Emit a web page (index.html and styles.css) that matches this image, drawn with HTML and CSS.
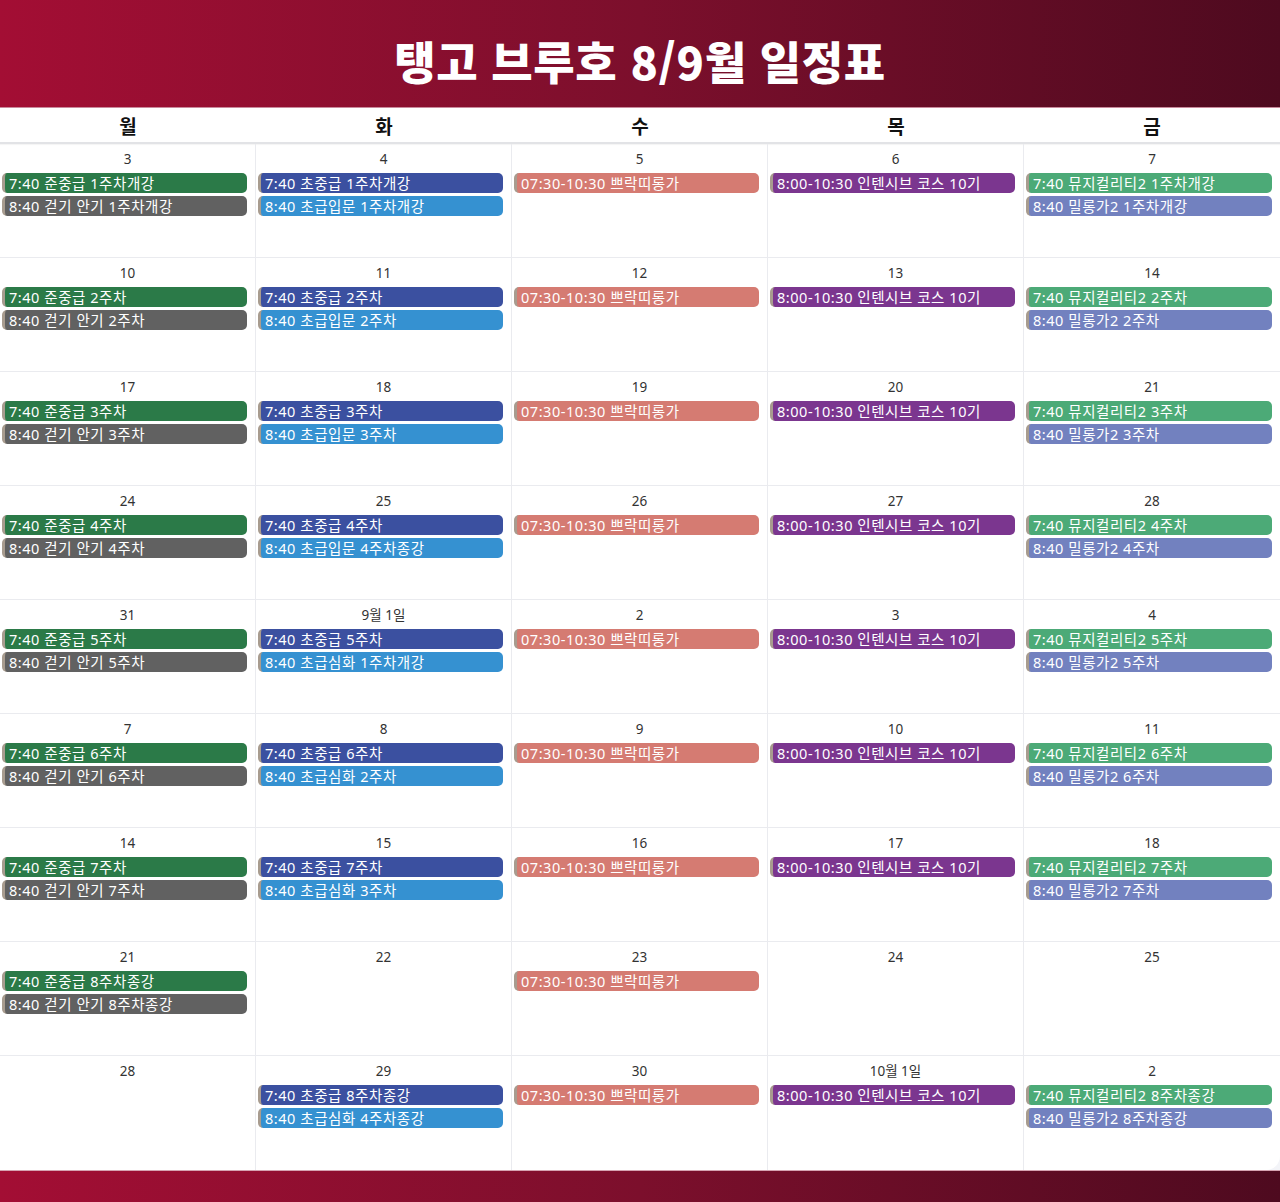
FILE: index.html
```html
<!DOCTYPE html>
<html lang="ko">
<head>
<meta charset="utf-8">
<title>탱고 브루호 8/9월 일정표</title>
<link rel="stylesheet" href="styles.css">
</head>
<body>
<header class="banner"><h1 class="title">탱고 브루호 8/9월 일정표</h1></header>
<main class="calendar">
  <div class="weekdays">
    <div class="wd">월</div><div class="wd">화</div><div class="wd">수</div><div class="wd">목</div><div class="wd">금</div>
  </div>
  <div class="grid">
    <!-- week 1 -->
    <div class="cell"><div class="date">3</div><div class="ev basil">7:40 준중급 1주차개강</div><div class="ev graphite">8:40 걷기 안기 1주차개강</div></div>
    <div class="cell"><div class="date">4</div><div class="ev blueberry">7:40 초중급 1주차개강</div><div class="ev peacock">8:40 초급입문 1주차개강</div></div>
    <div class="cell"><div class="date">5</div><div class="ev flamingo">07:30-10:30 쁘락띠롱가</div></div>
    <div class="cell"><div class="date">6</div><div class="ev grape">8:00-10:30 인텐시브 코스 10기</div></div>
    <div class="cell"><div class="date">7</div><div class="ev sage">7:40 뮤지컬리티2 1주차개강</div><div class="ev lavender">8:40 밀롱가2 1주차개강</div></div>
    <!-- week 2 -->
    <div class="cell"><div class="date">10</div><div class="ev basil">7:40 준중급 2주차</div><div class="ev graphite">8:40 걷기 안기 2주차</div></div>
    <div class="cell"><div class="date">11</div><div class="ev blueberry">7:40 초중급 2주차</div><div class="ev peacock">8:40 초급입문 2주차</div></div>
    <div class="cell"><div class="date">12</div><div class="ev flamingo">07:30-10:30 쁘락띠롱가</div></div>
    <div class="cell"><div class="date">13</div><div class="ev grape">8:00-10:30 인텐시브 코스 10기</div></div>
    <div class="cell"><div class="date">14</div><div class="ev sage">7:40 뮤지컬리티2 2주차</div><div class="ev lavender">8:40 밀롱가2 2주차</div></div>
    <!-- week 3 -->
    <div class="cell"><div class="date">17</div><div class="ev basil">7:40 준중급 3주차</div><div class="ev graphite">8:40 걷기 안기 3주차</div></div>
    <div class="cell"><div class="date">18</div><div class="ev blueberry">7:40 초중급 3주차</div><div class="ev peacock">8:40 초급입문 3주차</div></div>
    <div class="cell"><div class="date">19</div><div class="ev flamingo">07:30-10:30 쁘락띠롱가</div></div>
    <div class="cell"><div class="date">20</div><div class="ev grape">8:00-10:30 인텐시브 코스 10기</div></div>
    <div class="cell"><div class="date">21</div><div class="ev sage">7:40 뮤지컬리티2 3주차</div><div class="ev lavender">8:40 밀롱가2 3주차</div></div>
    <!-- week 4 -->
    <div class="cell"><div class="date">24</div><div class="ev basil">7:40 준중급 4주차</div><div class="ev graphite">8:40 걷기 안기 4주차</div></div>
    <div class="cell"><div class="date">25</div><div class="ev blueberry">7:40 초중급 4주차</div><div class="ev peacock">8:40 초급입문 4주차종강</div></div>
    <div class="cell"><div class="date">26</div><div class="ev flamingo">07:30-10:30 쁘락띠롱가</div></div>
    <div class="cell"><div class="date">27</div><div class="ev grape">8:00-10:30 인텐시브 코스 10기</div></div>
    <div class="cell"><div class="date">28</div><div class="ev sage">7:40 뮤지컬리티2 4주차</div><div class="ev lavender">8:40 밀롱가2 4주차</div></div>
    <!-- week 5 -->
    <div class="cell"><div class="date">31</div><div class="ev basil">7:40 준중급 5주차</div><div class="ev graphite">8:40 걷기 안기 5주차</div></div>
    <div class="cell"><div class="date">9월 1일</div><div class="ev blueberry">7:40 초중급 5주차</div><div class="ev peacock">8:40 초급심화 1주차개강</div></div>
    <div class="cell"><div class="date">2</div><div class="ev flamingo">07:30-10:30 쁘락띠롱가</div></div>
    <div class="cell"><div class="date">3</div><div class="ev grape">8:00-10:30 인텐시브 코스 10기</div></div>
    <div class="cell"><div class="date">4</div><div class="ev sage">7:40 뮤지컬리티2 5주차</div><div class="ev lavender">8:40 밀롱가2 5주차</div></div>
    <!-- week 6 -->
    <div class="cell"><div class="date">7</div><div class="ev basil">7:40 준중급 6주차</div><div class="ev graphite">8:40 걷기 안기 6주차</div></div>
    <div class="cell"><div class="date">8</div><div class="ev blueberry">7:40 초중급 6주차</div><div class="ev peacock">8:40 초급심화 2주차</div></div>
    <div class="cell"><div class="date">9</div><div class="ev flamingo">07:30-10:30 쁘락띠롱가</div></div>
    <div class="cell"><div class="date">10</div><div class="ev grape">8:00-10:30 인텐시브 코스 10기</div></div>
    <div class="cell"><div class="date">11</div><div class="ev sage">7:40 뮤지컬리티2 6주차</div><div class="ev lavender">8:40 밀롱가2 6주차</div></div>
    <!-- week 7 -->
    <div class="cell"><div class="date">14</div><div class="ev basil">7:40 준중급 7주차</div><div class="ev graphite">8:40 걷기 안기 7주차</div></div>
    <div class="cell"><div class="date">15</div><div class="ev blueberry">7:40 초중급 7주차</div><div class="ev peacock">8:40 초급심화 3주차</div></div>
    <div class="cell"><div class="date">16</div><div class="ev flamingo">07:30-10:30 쁘락띠롱가</div></div>
    <div class="cell"><div class="date">17</div><div class="ev grape">8:00-10:30 인텐시브 코스 10기</div></div>
    <div class="cell"><div class="date">18</div><div class="ev sage">7:40 뮤지컬리티2 7주차</div><div class="ev lavender">8:40 밀롱가2 7주차</div></div>
    <!-- week 8 -->
    <div class="cell"><div class="date">21</div><div class="ev basil">7:40 준중급 8주차종강</div><div class="ev graphite">8:40 걷기 안기 8주차종강</div></div>
    <div class="cell"><div class="date">22</div></div>
    <div class="cell"><div class="date">23</div><div class="ev flamingo">07:30-10:30 쁘락띠롱가</div></div>
    <div class="cell"><div class="date">24</div></div>
    <div class="cell"><div class="date">25</div></div>
    <!-- week 9 -->
    <div class="cell"><div class="date">28</div></div>
    <div class="cell"><div class="date">29</div><div class="ev blueberry">7:40 초중급 8주차종강</div><div class="ev peacock">8:40 초급심화 4주차종강</div></div>
    <div class="cell"><div class="date">30</div><div class="ev flamingo">07:30-10:30 쁘락띠롱가</div></div>
    <div class="cell"><div class="date">10월 1일</div><div class="ev grape">8:00-10:30 인텐시브 코스 10기</div></div>
    <div class="cell"><div class="date">2</div><div class="ev sage">7:40 뮤지컬리티2 8주차종강</div><div class="ev lavender">8:40 밀롱가2 8주차종강</div></div>
  </div>
</main>
<footer class="footer-bar"></footer>
</body>
</html>
```

FILE: styles.css
```css
* { box-sizing: border-box; }
html, body { margin: 0; padding: 0; }
body {
  width: 1280px;
  height: 1202px;
  overflow: hidden;
  background: #f3f4f8;
  font-family: "Noto Sans CJK KR", "Noto Sans", sans-serif;
}
.banner {
  height: 108px;
  background: linear-gradient(to right, #a30e34 0%, #7c0f2c 50%, #4e0a1f 100%);
  border-bottom: 1px solid #c98a9c;
  display: flex;
  justify-content: center;
  align-items: center;
  padding-top: 14px;
}
.title {
  margin: 0;
  color: #ffffff;
  font-family: "Noto Sans CJK KR", sans-serif;
  font-weight: 900;
  font-size: 45px;
  line-height: 1;
  letter-spacing: 0.6px;
}
.calendar {
  background: #ffffff;
  border-bottom-right-radius: 14px;
  overflow: hidden;
}
.weekdays {
  display: grid;
  grid-template-columns: repeat(5, 1fr);
  height: 36px;
  border-bottom: 2px solid #e2e3e6;
  box-shadow: 0 1px 1px rgba(0,0,0,0.04);
}
.wd {
  display: flex;
  align-items: center;
  justify-content: center;
  font-size: 19px;
  font-weight: 700;
  color: #111111;
}
.grid {
  display: grid;
  grid-template-columns: repeat(5, 1fr);
  grid-template-rows: repeat(9, 114px);
}
.cell {
  border-right: 1px solid #eaebef;
  border-bottom: 1px solid #eaebef;
  padding-top: 7px;
}
.cell:nth-child(5n) { border-right: none; }
.cell:nth-last-child(-n+5) { border-bottom: none; }
.date {
  text-align: center;
  font-family: "Noto Sans", "Noto Sans CJK KR", sans-serif;
  font-size: 13.5px;
  line-height: 16px;
  color: #333333;
  margin-bottom: 6px;
}
.ev {
  margin: 0 8px 3px 2px;
  height: 20px;
  line-height: 20px;
  border-radius: 5px;
  border-left: 3px solid #a89c8f;
  padding-left: 4px;
  color: #ffffff;
  font-family: "Noto Sans", "Noto Sans CJK KR", sans-serif;
  font-size: 14.5px;
  letter-spacing: 0.55px;
  white-space: nowrap;
  overflow: hidden;
}
.basil { background: #2b7a48; }
.graphite { background: #616161; }
.blueberry { background: #3b50a0; }
.peacock { background: #3591d1; }
.flamingo { background: #d57b72; }
.grape { background: #7b368f; }
.sage { background: #4caa77; }
.lavender { background: #7281bf; }
.footer-bar {
  height: 32px;
  background: linear-gradient(to right, #a30e34 0%, #7c0f2c 50%, #4e0a1f 100%);
  border-top: 1px solid #d6a3b1;
}
```
